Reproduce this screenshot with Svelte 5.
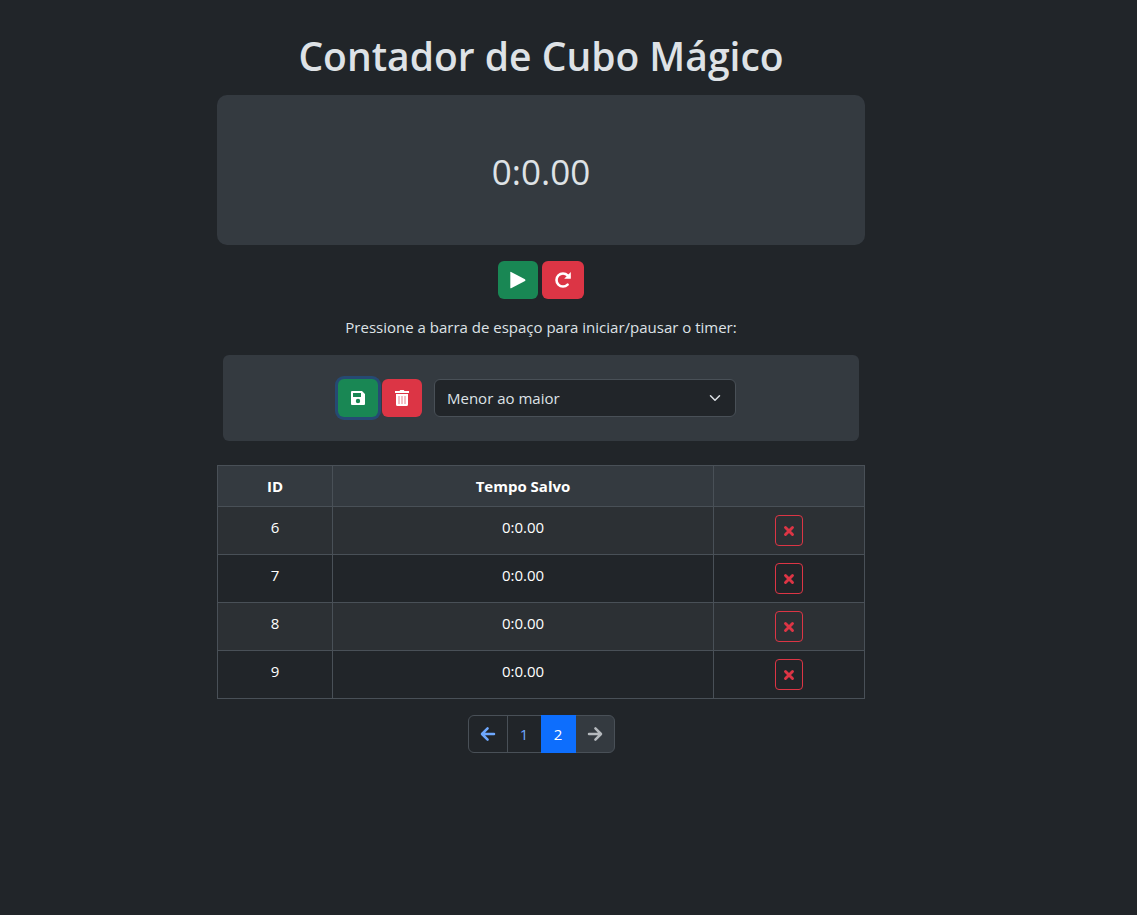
<script>
  const rows = [6, 7, 8, 9].map((id) => ({ id, time: '0:0.00' }));
  let order = $state('asc');
</script>

<main class="page">
  <div class="content">
    <h1>Contador de Cubo Mágico</h1>
    <section class="timer">0:0.00</section>

    <div class="buttons controls">
      <button class="btn green" aria-label="Iniciar">
        <svg width="20" height="20" viewBox="0 0 20 20" fill="#fff"><path d="M2.3 2.4v15.4q0 .8 .8 .4L17 11q1-.9 0-1.8L3.1 1.9Q2.3 1.5 2.3 2.4z" /></svg>
      </button>
      <button class="btn red wide" aria-label="Reiniciar">
        <svg width="18" height="18" viewBox="0 0 18 18" fill="none" stroke="#fff" stroke-width="2.6" stroke-linecap="round"><path d="M13.6 13.6A6.5 6.5 0 1 1 13.6 4.4L15 5.8" /><path d="M16.8 1v6.7H10.2z" fill="#fff" stroke="none" /></svg>
      </button>
    </div>

    <p>Pressione a barra de espaço para iniciar/pausar o timer:</p>

    <section class="toolbar">
      <div class="buttons">
        <button class="btn green focused" aria-label="Salvar">
          <svg width="16" height="16" viewBox="0 0 16 16" fill="#fff" fill-rule="evenodd"><path d="M2 1h10l3 3v10a1 1 0 0 1-1 1H2a1 1 0 0 1-1-1V2a1 1 0 0 1 1-1zM3 3v4h8V3zM8 8.8a2.2 2.2 0 1 0 0 4.4 2.2 2.2 0 0 0 0-4.4z" /></svg>
        </button>
        <button class="btn red" aria-label="Apagar todos">
          <svg width="16" height="18" viewBox="0 0 16 18" fill="#fff"><path d="M1 2h4.5l.8-1h3.4l.8 1H15v2H1z" /><path d="M2 5h12v10.5a1.5 1.5 0 0 1-1.5 1.5h-9A1.5 1.5 0 0 1 2 15.5z" /><path d="M5 7v8M8 7v8M11 7v8" stroke="#e8808b" stroke-width="1" /></svg>
        </button>
      </div>
      <div class="select-wrap">
        <select bind:value={order} aria-label="Ordenar">
          <option value="asc">Menor ao maior</option>
          <option value="desc">Maior ao menor</option>
        </select>
        <svg class="chevron" width="12" height="12" viewBox="0 0 16 16" fill="none" stroke="#dee2e6" stroke-width="2" stroke-linecap="round" stroke-linejoin="round"><path d="m2 5 6 6 6-6" /></svg>
      </div>
    </section>

    <table>
      <colgroup><col class="id" /><col class="time" /><col class="action" /></colgroup>
      <thead>
        <tr><th>ID</th><th>Tempo Salvo</th><th></th></tr>
      </thead>
      <tbody>
        {#each rows as row}
          <tr>
            <td>{row.id}</td>
            <td>{row.time}</td>
            <td>
              <button class="remove" aria-label="Remover {row.id}">
                <svg width="12" height="12" viewBox="0 0 12 12" stroke="#dc3545" stroke-width="2.9" stroke-linecap="round"><path d="M2.5 2.5l7 7M9.5 2.5l-7 7" /></svg>
              </button>
            </td>
          </tr>
        {/each}
      </tbody>
    </table>

    <nav aria-label="Páginas">
      <button class="arrow" aria-label="Anterior">
        <svg width="16" height="16" viewBox="0 0 16 16" fill="none" stroke="#6ea8fe" stroke-width="2.5" stroke-linecap="round" stroke-linejoin="round"><path d="M14 8H2.2M7.6 2.4L2 8l5.6 5.6" /></svg>
      </button>
      <button>1</button>
      <button class="active" aria-current="page">2</button>
      <button class="arrow off" aria-label="Próxima" disabled>
        <svg width="16" height="16" viewBox="0 0 16 16" fill="none" stroke="#b5b9bd" stroke-width="2.5" stroke-linecap="round" stroke-linejoin="round"><path d="M2 8h11.8M8.4 2.4L14 8l-5.6 5.6" /></svg>
      </button>
    </nav>
  </div>
</main>

<style>
  :global(body) {
    margin: 0;
    background: #212529;
  }
  .page {
    box-sizing: border-box;
    padding: 32px 55px 32px 0;
    font: 15px/24px "Segoe UI", "Open Sans", sans-serif;
    color: #dee2e6;
    text-align: center;
  }
  .content {
    width: 60%;
    max-width: 648px;
    margin: 0 auto;
  }
  * {
    box-sizing: border-box;
  }
  svg {
    display: block;
  }
  button,
  select {
    font: inherit;
    margin: 0;
  }
  h1 {
    margin: 0 0 15px;
    font-size: 39px;
    line-height: 48px;
    font-weight: 600;
    white-space: nowrap;
  }
  .timer {
    padding: 50px 16px 46px;
    border-radius: 10px;
    background: #343a40;
    font-size: 35px;
    line-height: 54px;
  }
  .buttons {
    display: flex;
    gap: 4px;
    justify-content: center;
  }
  .controls {
    margin: 16px 0;
  }
  .btn {
    display: flex;
    align-items: center;
    justify-content: center;
    width: 40px;
    height: 38px;
    padding: 0;
    border: 0;
    border-radius: 6px;
  }
  .wide {
    width: 42px;
  }
  .green {
    background: #198754;
  }
  .red {
    background: #dc3545;
  }
  .focused {
    box-shadow: 0 0 0 3px #264a73;
  }
  p {
    margin: 0 0 16px;
  }
  .toolbar {
    display: flex;
    justify-content: center;
    gap: 12px;
    margin: 0 6px 24px;
    padding: 24px 8px 24px 0;
    border-radius: 6px;
    background: #343a40;
  }
  .select-wrap {
    position: relative;
    width: 302px;
  }
  select {
    width: 100%;
    height: 38px;
    padding: 0 36px 0 12px;
    appearance: none;
    border: 1px solid #495057;
    border-radius: 6px;
    background: #212529;
    color: #dee2e6;
  }
  .chevron {
    position: absolute;
    right: 15px;
    top: 13px;
    pointer-events: none;
  }
  table {
    width: 100%;
    margin-bottom: 16px;
    table-layout: fixed;
    border-collapse: collapse;
    color: #fff;
  }
  .id {
    width: 115px;
  }
  .action {
    width: 151px;
  }
  th,
  td {
    padding: 8px;
    border: 1px solid #495057;
    vertical-align: top;
  }
  th {
    height: 41px;
    background: #343a40;
    font-weight: 700;
  }
  td {
    height: 48px;
  }
  tbody tr:nth-child(odd) {
    background: #2c3034;
  }
  .remove {
    display: flex;
    align-items: center;
    justify-content: center;
    width: 28px;
    height: 31px;
    margin: 0 auto;
    padding: 0;
    border: 1px solid #dc3545;
    border-radius: 4px;
    background: transparent;
  }
  nav {
    display: flex;
    justify-content: center;
  }
  nav button {
    display: flex;
    align-items: center;
    justify-content: center;
    width: 35px;
    height: 38px;
    margin-left: -1px;
    padding: 0;
    border: 1px solid #495057;
    background: #212529;
    color: #6ea8fe;
  }
  nav .arrow {
    width: 40px;
  }
  nav .arrow:first-child {
    margin-left: 0;
    border-radius: 6px 0 0 6px;
  }
  nav .off {
    border-radius: 0 6px 6px 0;
    background: #343a40;
  }
  nav .active {
    z-index: 1;
    border-color: #0d6efd;
    background: #0d6efd;
    color: #fff;
  }
</style>
